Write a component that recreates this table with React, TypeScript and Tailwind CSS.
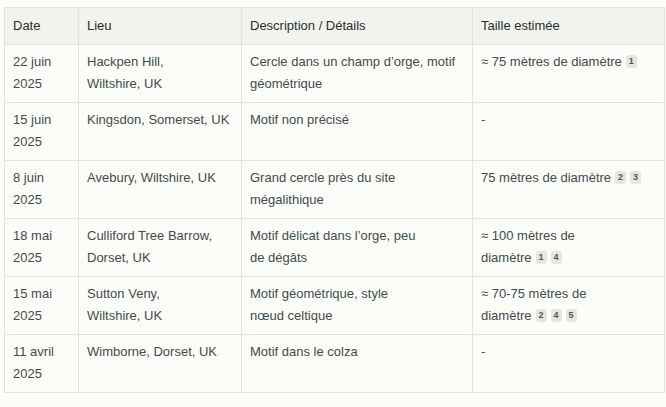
import React from 'react';

type Row = {
    date: string[];
    lieu: string[];
    desc: string[];
    taille: string[];
    refs: number[];
};

// line breaks follow the source layout
const rows: Row[] = [
    { date: ['22 juin', '2025'], lieu: ['Hackpen Hill,', 'Wiltshire, UK'], desc: ['Cercle dans un champ d’orge, motif', 'géométrique'], taille: ['≈ 75 mètres de diamètre'], refs: [1] },
    { date: ['15 juin', '2025'], lieu: ['Kingsdon, Somerset, UK'], desc: ['Motif non précisé'], taille: ['-'], refs: [] },
    { date: ['8 juin', '2025'], lieu: ['Avebury, Wiltshire, UK'], desc: ['Grand cercle près du site', 'mégalithique'], taille: ['75 mètres de diamètre'], refs: [2, 3] },
    { date: ['18 mai', '2025'], lieu: ['Culliford Tree Barrow,', 'Dorset, UK'], desc: ['Motif délicat dans l’orge, peu', 'de dégâts'], taille: ['≈ 100 mètres de', 'diamètre'], refs: [1, 4] },
    { date: ['15 mai', '2025'], lieu: ['Sutton Veny,', 'Wiltshire, UK'], desc: ['Motif géométrique, style', 'nœud celtique'], taille: ['≈ 70-75 mètres de', 'diamètre'], refs: [2, 4, 5] },
    { date: ['11 avril', '2025'], lieu: ['Wimborne, Dorset, UK'], desc: ['Motif dans le colza'], taille: ['-'], refs: [] },
];

function Lines({ lines }: { lines: string[] }) {
    return (
        <>
            {lines.map((l, i) => (
                <React.Fragment key={i}>
                    {i > 0 && <br />}
                    {l}
                </React.Fragment>
            ))}
        </>
    );
}

function Ref({ n }: { n: number }) {
    return (
        <span className="inline-flex items-center justify-center align-middle relative -top-[1px] ml-[4px] w-[11px] h-[13px] rounded-[3px] bg-[#e6e6e1] text-[9px] leading-none font-bold text-[#4d5857]">
            {n}
        </span>
    );
}

const cell = 'border border-[#e3e3dd] px-[8px] pt-[6px] pb-[7px] align-top whitespace-nowrap';

export default function App() {
    return (
        <div className="min-h-screen bg-[#fcfcf9] pt-[7px] px-[4px] font-['Liberation_Sans',Arial,sans-serif] text-[13px] leading-[22px] text-[#3e4c4c]">
            <table className="table-fixed border-collapse w-[660px]">
                <colgroup>
                    <col className="w-[74px]" />
                    <col className="w-[163px]" />
                    <col className="w-[231px]" />
                    <col className="w-[192px]" />
                </colgroup>
                <thead>
                    <tr className="bg-[#f3f3ee]">
                        {['Date', 'Lieu', 'Description / Détails', 'Taille estimée'].map((h) => (
                            <th key={h} className="border border-[#e3e3dd] px-[8px] py-[7px] text-left font-medium text-[#24302f]">
                                {h}
                            </th>
                        ))}
                    </tr>
                </thead>
                <tbody>
                    {rows.map((r, i) => (
                        <tr key={i}>
                            <td className={cell}>
                                <Lines lines={r.date} />
                            </td>
                            <td className={cell}>
                                <Lines lines={r.lieu} />
                            </td>
                            <td className={cell}>
                                <Lines lines={r.desc} />
                            </td>
                            <td className={cell}>
                                <Lines lines={r.taille} />
                                {r.refs.map((n) => (
                                    <Ref key={n} n={n} />
                                ))}
                            </td>
                        </tr>
                    ))}
                </tbody>
            </table>
        </div>
    );
}
